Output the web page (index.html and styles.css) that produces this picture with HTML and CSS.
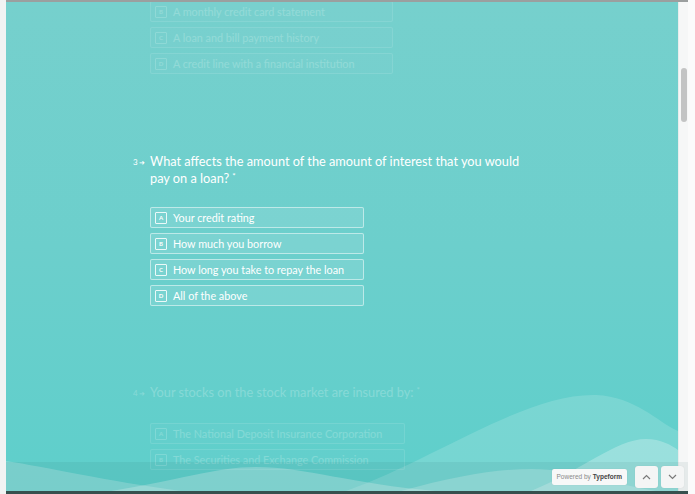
FILE: index.html
```html
<!DOCTYPE html>
<html>
<head>
<meta charset="utf-8">
<link rel="stylesheet" href="styles.css">
</head>
<body>
<div class="frame">
  <div class="edge-left"></div>
  <div class="app">
    <div class="topbar"></div>
    <div class="stage">
      <div class="viewport">
        <main class="form">
          <section class="block faded">
            <ul class="choices w243 first">
              <li class="choice"><span class="key">B</span><span class="label">A monthly credit card statement</span></li>
              <li class="choice"><span class="key">C</span><span class="label">A loan and bill payment history</span></li>
              <li class="choice"><span class="key">D</span><span class="label">A credit line with a financial institution</span></li>
            </ul>
          </section>

          <section class="block current">
            <div class="question">
              <span class="qnum">3<span class="arrow">&#10140;</span></span>
              <h2 class="qtext">What affects the amount of the amount of interest that you would pay on a loan?<span class="req">*</span></h2>
            </div>
            <ul class="choices w214">
              <li class="choice"><span class="key">A</span><span class="label">Your credit rating</span></li>
              <li class="choice"><span class="key">B</span><span class="label">How much you borrow</span></li>
              <li class="choice"><span class="key">C</span><span class="label">How long you take to repay the loan</span></li>
              <li class="choice"><span class="key">D</span><span class="label">All of the above</span></li>
            </ul>
          </section>

          <section class="block faded next">
            <div class="question">
              <span class="qnum">4<span class="arrow">&#10140;</span></span>
              <h2 class="qtext">Your stocks on the stock market are insured by:<span class="req">*</span></h2>
            </div>
            <ul class="choices w255 q4">
              <li class="choice"><span class="key">A</span><span class="label">The National Deposit Insurance Corporation</span></li>
              <li class="choice"><span class="key">B</span><span class="label">The Securities and Exchange Commission</span></li>
            </ul>
          </section>
        </main>

        <svg class="waves" viewBox="0 0 672 100" width="672" height="100" preserveAspectRatio="none">
          <path d="M340 100 C 430 68, 520 2, 590 4 C 630 6, 650 30, 672 40 L672 100 Z" fill="#fff" fill-opacity="0.15"/>
          <path d="M0 70 C 40 76, 100 90, 175 100 L0 100 Z" fill="#fff" fill-opacity="0.22"/>
          <path d="M105 100 C 170 90, 210 76, 250 76 C 300 76, 345 93, 430 100 Z" fill="#fff" fill-opacity="0.26"/>
          <path d="M395 100 C 450 85, 490 78, 526 78 C 570 78, 605 93, 650 100 Z" fill="#fff" fill-opacity="0.22"/>
          <path d="M525 100 C 575 80, 610 48, 640 48 C 655 48, 665 54, 672 59 L672 100 Z" fill="#fff" fill-opacity="0.26"/>
        </svg>
      </div>
      <div class="scroll"><div class="thumb"></div></div>

      <footer class="footer">
        <a class="badge">Powered by <b>Typeform</b></a>
        <div class="navs">
          <button class="nav"><svg width="9" height="6" viewBox="0 0 9 6"><path d="M1 5 L4.5 1.5 L8 5" fill="none" stroke="#7a7a7a" stroke-width="1.2"/></svg></button>
          <button class="nav"><svg width="9" height="6" viewBox="0 0 9 6"><path d="M1 1 L4.5 4.5 L8 1" fill="none" stroke="#7a7a7a" stroke-width="1.2"/></svg></button>
        </div>
      </footer>
    </div>
    <div class="bottombar"></div>
  </div>
  <div class="edge-right"></div>
</div>
</body>
</html>
```

FILE: styles.css
```css
* { box-sizing: border-box; }
html, body { margin: 0; padding: 0; }
body {
  width: 695px;
  height: 494px;
  overflow: hidden;
  background: #f3f5f5;
  font-family: Lato, "Open Sans", sans-serif;
}
.frame { display: flex; height: 494px; }
.edge-left { width: 6px; background: #f1f3f3; }
.edge-right { width: 7px; background: #fbfbfb; }
.app { width: 682px; display: flex; flex-direction: column; }
.topbar { height: 2px; background: #9b9f9f; }
.bottombar { height: 3px; background: #37504e; }
.stage { flex: 1; display: flex; position: relative; overflow: hidden; }
.viewport {
  width: 672px;
  position: relative;
  overflow: hidden;
  background: linear-gradient(180deg, #76d0cd 0%, #6ccfcc 50%, #5ecfcb 100%);
}
.scroll {
  width: 10px;
  background: #f6f7f7;
  border-left: 1px solid #e9ecec;
  padding: 66px 0 0 2px;
}
.thumb { width: 6px; height: 54px; border-radius: 3px; background: #c3c4c4; }

.form { padding-left: 127px; color: #fff; }
.block { display: flex; flex-direction: column; }
.faded { opacity: 0.22; }
.current { margin-top: 79px; }
.next { margin-top: 78px; }

.question { display: flex; align-items: flex-start; }
.qnum {
  width: 17px;
  font-size: 8px;
  line-height: 17px;
  padding-top: 1px;
  white-space: nowrap;
  letter-spacing: 0.3px;
}
.arrow { font-size: 7px; margin-left: 1px; }
.qtext {
  margin: 0;
  width: 380px;
  font-size: 12.75px;
  font-weight: 400;
  line-height: 17px;
}
.req { font-size: 8px; line-height: 8px; vertical-align: 4px; margin-left: 3px; }

.choices {
  list-style: none;
  margin: 20px 0 0 17px;
  padding: 0;
  display: flex;
  flex-direction: column;
  gap: 5px;
}
.choices.first { margin-top: -1px; }
.choices.q4 { margin-top: 21px; }
.w214 { width: 214px; }
.w243 { width: 243px; }
.w255 { width: 255px; }
.choice {
  height: 21px;
  display: flex;
  align-items: center;
  padding-left: 4px;
  border: 1px solid rgba(255,255,255,0.5);
  border-radius: 2px;
  background: rgba(255,255,255,0.1);
}
.key {
  width: 12px;
  height: 12px;
  border: 1px solid rgba(255,255,255,0.85);
  border-radius: 1px;
  font-size: 6px;
  font-weight: 700;
  display: flex;
  align-items: center;
  justify-content: center;
  margin-right: 6px;
}
.label { font-size: 10.8px; line-height: 13px; white-space: nowrap; }

.waves { position: absolute; left: 0; bottom: 0; display: block; }

.footer {
  position: absolute;
  left: 0;
  right: 0;
  bottom: 0;
  height: 29px;
  background: rgba(20, 70, 70, 0.07);
  display: flex;
  align-items: center;
  justify-content: flex-end;
  padding-right: 4px;
}
.badge {
  height: 16px;
  padding: 0 5px;
  background: #f7f8f8;
  border-radius: 2px;
  box-shadow: 0 0 1px rgba(0,0,0,0.15);
  font-family: "Liberation Sans", Arial, sans-serif;
  font-size: 6.5px;
  color: #8a8a8a;
  display: flex;
  align-items: center;
  gap: 2px;
  margin-right: 8px;
}
.badge b { color: #444; font-weight: 700; }
.navs { display: flex; gap: 3px; }
.nav {
  width: 23px;
  height: 22px;
  padding: 0;
  border: none;
  border-radius: 3px;
  background: #f4f5f5;
  box-shadow: 0 0 1px rgba(0,0,0,0.12);
  display: flex;
  align-items: center;
  justify-content: center;
}
.nav svg { display: block; }
```
